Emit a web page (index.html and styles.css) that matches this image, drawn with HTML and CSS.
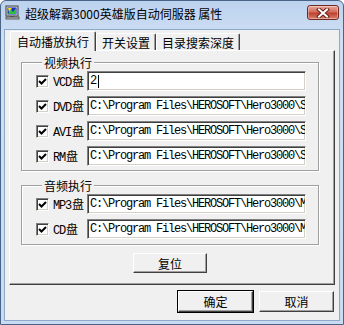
FILE: index.html
```html
<!DOCTYPE html>
<html lang="zh-CN">
<head>
    <meta charset="UTF-8">
    <meta name="viewport" content="width=device-width, initial-scale=1.0">
    <title>超级解霸3000英雄版自动伺服器 属性</title>
    <link rel="stylesheet" href="styles.css">
</head>
<body>

    <div class="window">

        <!-- Title Bar -->
        <div class="title-bar">
            <svg class="app-icon" width="15" height="15" viewBox="0 0 15 15">
                <rect x="1" y="1" width="12" height="10" fill="#d8d8d8" stroke="#404040"/>
                <rect x="2.5" y="2.5" width="9" height="7" fill="#1830c0"/>
                <path d="M3 9 L6 4 L8 7 L11 3 L11 9 Z" fill="#30c040"/>
                <path d="M3 3 L7 3 L4 7 Z" fill="#f0e020"/>
                <rect x="5" y="11" width="4" height="1" fill="#606060"/>
                <rect x="1" y="12" width="13" height="2" fill="#c0c0c0" stroke="#404040" stroke-width="0.8"/>
            </svg>
            <span class="title">超级解霸3000英雄版自动伺服器 属性</span>
            <button class="close-btn">
                <svg width="14" height="10" viewBox="0 0 14 10">
                    <path d="M3 1.5 L11 8.5 M11 1.5 L3 8.5" stroke="#6a2018" stroke-width="4" stroke-linecap="square"/>
                    <path d="M3 1.5 L11 8.5 M11 1.5 L3 8.5" stroke="#ffffff" stroke-width="2" stroke-linecap="square"/>
                </svg>
            </button>
        </div>

        <!-- Dialog Body -->
        <div class="client">
            <div class="tabs">
                <div class="tab active">自动播放执行</div>
                <div class="tab">开关设置</div>
                <div class="tab">目录搜索深度</div>
            </div>

            <div class="panel">
                <fieldset class="group">
                    <legend>视频执行</legend>
                    <div class="row">
                        <span class="check"><svg width="9" height="9" viewBox="0 0 9 9"><path d="M1 4 L3.5 6.5 L8 2" fill="none" stroke="#000" stroke-width="2"/></svg></span>
                        <span class="label">VCD<span class="cjk">盘</span></span>
                        <div class="field">2<span class="caret"></span></div>
                    </div>
                    <div class="row">
                        <span class="check"><svg width="9" height="9" viewBox="0 0 9 9"><path d="M1 4 L3.5 6.5 L8 2" fill="none" stroke="#000" stroke-width="2"/></svg></span>
                        <span class="label">DVD<span class="cjk">盘</span></span>
                        <div class="field">C:\Program Files\HEROSOFT\Hero3000\S</div>
                    </div>
                    <div class="row">
                        <span class="check"><svg width="9" height="9" viewBox="0 0 9 9"><path d="M1 4 L3.5 6.5 L8 2" fill="none" stroke="#000" stroke-width="2"/></svg></span>
                        <span class="label">AVI<span class="cjk">盘</span></span>
                        <div class="field">C:\Program Files\HEROSOFT\Hero3000\S</div>
                    </div>
                    <div class="row">
                        <span class="check"><svg width="9" height="9" viewBox="0 0 9 9"><path d="M1 4 L3.5 6.5 L8 2" fill="none" stroke="#000" stroke-width="2"/></svg></span>
                        <span class="label">RM<span class="cjk">盘</span></span>
                        <div class="field">C:\Program Files\HEROSOFT\Hero3000\S</div>
                    </div>
                </fieldset>

                <fieldset class="group audio">
                    <legend>音频执行</legend>
                    <div class="row">
                        <span class="check"><svg width="9" height="9" viewBox="0 0 9 9"><path d="M1 4 L3.5 6.5 L8 2" fill="none" stroke="#000" stroke-width="2"/></svg></span>
                        <span class="label">MP3<span class="cjk">盘</span></span>
                        <div class="field">C:\Program Files\HEROSOFT\Hero3000\M</div>
                    </div>
                    <div class="row">
                        <span class="check"><svg width="9" height="9" viewBox="0 0 9 9"><path d="M1 4 L3.5 6.5 L8 2" fill="none" stroke="#000" stroke-width="2"/></svg></span>
                        <span class="label">CD<span class="cjk">盘</span></span>
                        <div class="field">C:\Program Files\HEROSOFT\Hero3000\M</div>
                    </div>
                </fieldset>

                <div class="reset-row">
                    <button class="btn reset-btn">复位</button>
                </div>
            </div>

            <div class="footer">
                <button class="btn default">确定</button>
                <button class="btn">取消</button>
            </div>
        </div>
    </div>

</body>
</html>
```

FILE: styles.css
```css
* {
    margin: 0;
    padding: 0;
    box-sizing: border-box;
}

body {
    width: 344px;
    height: 325px;
    background-color: #ffffff;
    color: #000000;
    font-family: "Noto Sans CJK SC", sans-serif;
    font-size: 12px;
}

/* Window frame */
.window {
    width: 344px;
    height: 325px;
    display: flex;
    flex-direction: column;
    padding: 0 3px 3px;
    background: linear-gradient(#bcd2ee, #cfe0f4 40px, #c8dbf2);
    border: 1px solid #4a6488;
    border-radius: 6px 6px 0 0;
}

.title-bar {
    height: 28px;
    display: flex;
    align-items: flex-start;
    padding: 4px 0 0 1px;
}

.app-icon {
    flex-shrink: 0;
}

.title {
    margin-left: 5px;
    line-height: 18px;
    white-space: nowrap;
}

.close-btn {
    margin-left: auto;
    margin-right: 1px;
    width: 32px;
    height: 15px;
    display: flex;
    align-items: center;
    justify-content: center;
    border: 1px solid #6e2a22;
    border-radius: 3px;
    background: linear-gradient(#e9a89c, #d46c5c 45%, #c0402e 55%, #d8806c);
    box-shadow: inset 0 0 0 1px rgba(255, 255, 255, 0.35);
}

/* Client area */
.client {
    flex: 1;
    display: flex;
    flex-direction: column;
    padding: 1px 4px 0;
    background-color: #f0f0f0;
    border: 1px solid #8ea8c8;
}

/* Tabs */
.tabs {
    height: 19px;
    display: flex;
    align-items: flex-end;
    padding-left: 1px;
    position: relative;
    z-index: 1;
}

.tab {
    height: 17px;
    display: flex;
    align-items: center;
    padding: 0 5px;
    border-top: 1px solid #ffffff;
    border-left: 1px solid #ffffff;
    border-right: 1px solid #404040;
    border-radius: 2px 2px 0 0;
    box-shadow: inset -1px 0 0 #a0a0a0;
    background-color: #f0f0f0;
    white-space: nowrap;
}

.tab.active {
    height: 20px;
    margin-bottom: -1px;
    padding: 0 6px;
}

.panel {
    display: flex;
    flex-direction: column;
    padding: 4px 15px 11px 11px;
    border-top: 1px solid #ffffff;
    border-left: 1px solid #ffffff;
    border-right: 1px solid #404040;
    border-bottom: 1px solid #404040;
    box-shadow: inset -1px -1px 0 #a0a0a0;
}

/* Group boxes */
.group {
    min-width: 0;
    padding: 1px 12px 4px 14px;
    border: 1px solid #a0a0a0;
    box-shadow: inset 1px 1px 0 #ffffff, 1px 1px 0 #ffffff;
}

.group legend {
    margin-left: 6px;
    padding: 0 2px;
    line-height: 15px;
    background-color: #f0f0f0;
}

.group.audio {
    margin-top: 7px;
    padding-bottom: 5px;
}

.row {
    height: 20px;
    display: flex;
    align-items: center;
}

.row + .row {
    margin-top: 5px;
}

.check {
    width: 13px;
    height: 13px;
    flex-shrink: 0;
    display: flex;
    align-items: center;
    justify-content: center;
    background-color: #ffffff;
    border-top: 1px solid #808080;
    border-left: 1px solid #808080;
    border-right: 1px solid #ffffff;
    border-bottom: 1px solid #ffffff;
    box-shadow: inset 1px 1px 0 #404040, inset -1px -1px 0 #d4d0c8;
}

.label {
    width: 34px;
    margin-left: 4px;
    flex-shrink: 0;
    font-family: "Liberation Mono", "Noto Sans CJK SC", monospace;
    font-size: 12px;
    letter-spacing: -1.2px;
    white-space: nowrap;
}

.label .cjk {
    margin-left: 1px;
    font-family: "Noto Sans CJK SC", sans-serif;
    font-size: 12px;
    letter-spacing: 0;
}

.field {
    flex: 1;
    min-width: 0;
    height: 20px;
    display: flex;
    align-items: center;
    padding: 0 2px;
    overflow: hidden;
    white-space: nowrap;
    background-color: #ffffff;
    border-top: 1px solid #808080;
    border-left: 1px solid #808080;
    border-right: 1px solid #ffffff;
    border-bottom: 1px solid #ffffff;
    box-shadow: inset 1px 1px 0 #404040, inset -1px -1px 0 #d4d0c8;
    font-family: "Liberation Mono", monospace;
    font-size: 12px;
    letter-spacing: -1.2px;
}

.caret {
    width: 1px;
    height: 13px;
    margin-left: 2px;
    background-color: #000000;
}

/* Buttons */
.btn {
    width: 75px;
    height: 21px;
    font-family: "Noto Sans CJK SC", sans-serif;
    font-size: 12px;
    color: #000000;
    background-color: #f0f0f0;
    border-top: 1px solid #ffffff;
    border-left: 1px solid #ffffff;
    border-right: 1px solid #404040;
    border-bottom: 1px solid #404040;
    box-shadow: inset -1px -1px 0 #a0a0a0;
}

.btn.default {
    outline: 1px solid #000000;
}

.reset-row {
    display: flex;
    justify-content: center;
    margin-top: 8px;
}

.reset-btn {
    width: 74px;
    height: 20px;
}

.footer {
    display: flex;
    justify-content: flex-end;
    gap: 6px;
    padding: 6px 1px 0 0;
}
```
